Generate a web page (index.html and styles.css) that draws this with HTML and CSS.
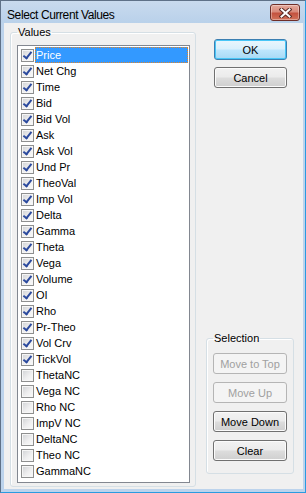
FILE: index.html
```html
<!DOCTYPE html>
<html lang="en">
<head>
    <meta charset="UTF-8">
    <title>Select Current Values</title>
    <link rel="stylesheet" href="styles.css">
</head>
<body>
<div class="window">
    <div class="titlebar">
        <span class="title">Select Current Values</span>
        <span class="close">
            <svg width="13" height="10" viewBox="0 0 13 10">
                <path d="M2.5 1.5 L10.5 8.5 M10.5 1.5 L2.5 8.5" stroke="#5b2a24" stroke-width="4" stroke-linecap="square"/>
                <path d="M2.5 1.5 L10.5 8.5 M10.5 1.5 L2.5 8.5" stroke="#ffffff" stroke-width="2" stroke-linecap="square"/>
            </svg>
        </span>
    </div>

    <div class="client">
        <fieldset class="group values">
            <legend>Values</legend>
            <ul class="checklist">
                <li class="item selected"><span class="check on"></span><span class="label">Price</span></li>
                <li class="item"><span class="check on"></span><span class="label">Net Chg</span></li>
                <li class="item"><span class="check on"></span><span class="label">Time</span></li>
                <li class="item"><span class="check on"></span><span class="label">Bid</span></li>
                <li class="item"><span class="check on"></span><span class="label">Bid Vol</span></li>
                <li class="item"><span class="check on"></span><span class="label">Ask</span></li>
                <li class="item"><span class="check on"></span><span class="label">Ask Vol</span></li>
                <li class="item"><span class="check on"></span><span class="label">Und Pr</span></li>
                <li class="item"><span class="check on"></span><span class="label">TheoVal</span></li>
                <li class="item"><span class="check on"></span><span class="label">Imp Vol</span></li>
                <li class="item"><span class="check on"></span><span class="label">Delta</span></li>
                <li class="item"><span class="check on"></span><span class="label">Gamma</span></li>
                <li class="item"><span class="check on"></span><span class="label">Theta</span></li>
                <li class="item"><span class="check on"></span><span class="label">Vega</span></li>
                <li class="item"><span class="check on"></span><span class="label">Volume</span></li>
                <li class="item"><span class="check on"></span><span class="label">OI</span></li>
                <li class="item"><span class="check on"></span><span class="label">Rho</span></li>
                <li class="item"><span class="check on"></span><span class="label">Pr-Theo</span></li>
                <li class="item"><span class="check on"></span><span class="label">Vol Crv</span></li>
                <li class="item"><span class="check on"></span><span class="label">TickVol</span></li>
                <li class="item"><span class="check"></span><span class="label">ThetaNC</span></li>
                <li class="item"><span class="check"></span><span class="label">Vega NC</span></li>
                <li class="item"><span class="check"></span><span class="label">Rho NC</span></li>
                <li class="item"><span class="check"></span><span class="label">ImpV NC</span></li>
                <li class="item"><span class="check"></span><span class="label">DeltaNC</span></li>
                <li class="item"><span class="check"></span><span class="label">Theo NC</span></li>
                <li class="item"><span class="check"></span><span class="label">GammaNC</span></li>
            </ul>
        </fieldset>

        <div class="side">
            <button class="btn default">OK</button>
            <button class="btn cancel">Cancel</button>

            <fieldset class="group selection">
                <legend>Selection</legend>
                <button class="btn" disabled>Move to Top</button>
                <button class="btn" disabled>Move Up</button>
                <button class="btn">Move Down</button>
                <button class="btn">Clear</button>
            </fieldset>
        </div>
    </div>
</div>
</body>
</html>
```

FILE: styles.css
```css
* { box-sizing: border-box; }
body { margin: 0; font-family: "Liberation Sans", Arial, sans-serif; font-size: 11px; color: #000; }

.window { width: 306px; height: 493px; border: 1px solid; border-color: #5f7188 #2a9be0 #2a9be0 #5f7188; background: #bcd3ec; padding: 0 2px 3px 3px; display: flex; flex-direction: column; }

.titlebar { height: 22px; margin: 0 -2px 0 -3px; padding-left: 6px; display: flex; align-items: flex-start; background: linear-gradient(#c9daee, #b9d1ea); }
.title { margin-top: 7px; font-size: 12px; line-height: 14px; letter-spacing: -0.4px; }
.close { width: 30px; height: 17px; margin: 3px 5px 0 auto; border: 1px solid #6e2e28; border-radius: 3px; display: flex; align-items: center; justify-content: center; background: linear-gradient(#e4a99c 0%, #d98a7b 45%, #c4523f 55%, #d2735b 100%); box-shadow: inset 0 0 0 1px rgba(255,255,255,.35); }
.close svg { display: block; }

.client { height: 466px; background: #f0f0f0; display: flex; }

.group { margin: 0; min-width: 0; border: 1px solid #d5dfe5; border-radius: 3px; box-shadow: inset 1px 1px 0 #fff; }
.group legend { padding: 0 1px; margin: 0; line-height: 13px; font-size: 11px; }

.values { width: 186px; margin: 3px 0 0 6px; padding: 6px 5px 3px 6px; align-self: flex-start; }

.checklist { list-style: none; margin: 0; padding: 1px; height: 438px; border: 1px solid #828790; background: #fff; }
.item { height: 16px; display: flex; align-items: center; }
.check { flex: none; width: 13px; height: 13px; margin: 0 1px 0 2px; position: relative; border: 1px solid #8e8f8f; background: linear-gradient(135deg, #cfd1d4 0%, #eeeeef 55%, #fbfbfb 100%); box-shadow: inset 0 0 0 1px #f6f6f6; }
.check.on::after { content: ""; position: absolute; left: 3px; top: 0; width: 3px; height: 7px; border: solid #2b4a9e; border-width: 0 2px 2px 0; transform: rotate(38deg); }
.label { flex: 1; height: 16px; line-height: 16px; padding-left: 1px; white-space: nowrap; }
.selected .label { background: #3399ff; color: #fff; border: 1px dotted #e0852a; line-height: 14px; padding-left: 0; }

.side { flex: 1; display: flex; flex-direction: column; align-items: flex-start; }

.btn { width: 74px; height: 21px; padding: 0; font-family: inherit; font-size: 11px; color: #000; border: 1px solid #707070; border-radius: 3px; background: linear-gradient(#f2f2f2 0%, #ebebeb 48%, #dddddd 52%, #cfcfcf 100%); box-shadow: inset 0 0 0 1px #fbfbfb; }
.btn:disabled { color: #a0a0a0; border-color: #b5b5b5; background: #f4f4f4; box-shadow: none; }
.default { width: 73px; margin: 16px 0 0 18px; border-color: #3c7fb1; background: linear-gradient(#eaf6fd 0%, #d9f0fc 48%, #bee6fd 52%, #a7d9f5 100%); box-shadow: inset 0 0 0 1px #48c6f7; }
.cancel { width: 73px; margin: 7px 0 0 18px; }

.selection { width: 88px; margin: auto 0 15px 10px; padding: 8px 6px 12px 6px; display: flex; flex-direction: column; gap: 8px; }
```
